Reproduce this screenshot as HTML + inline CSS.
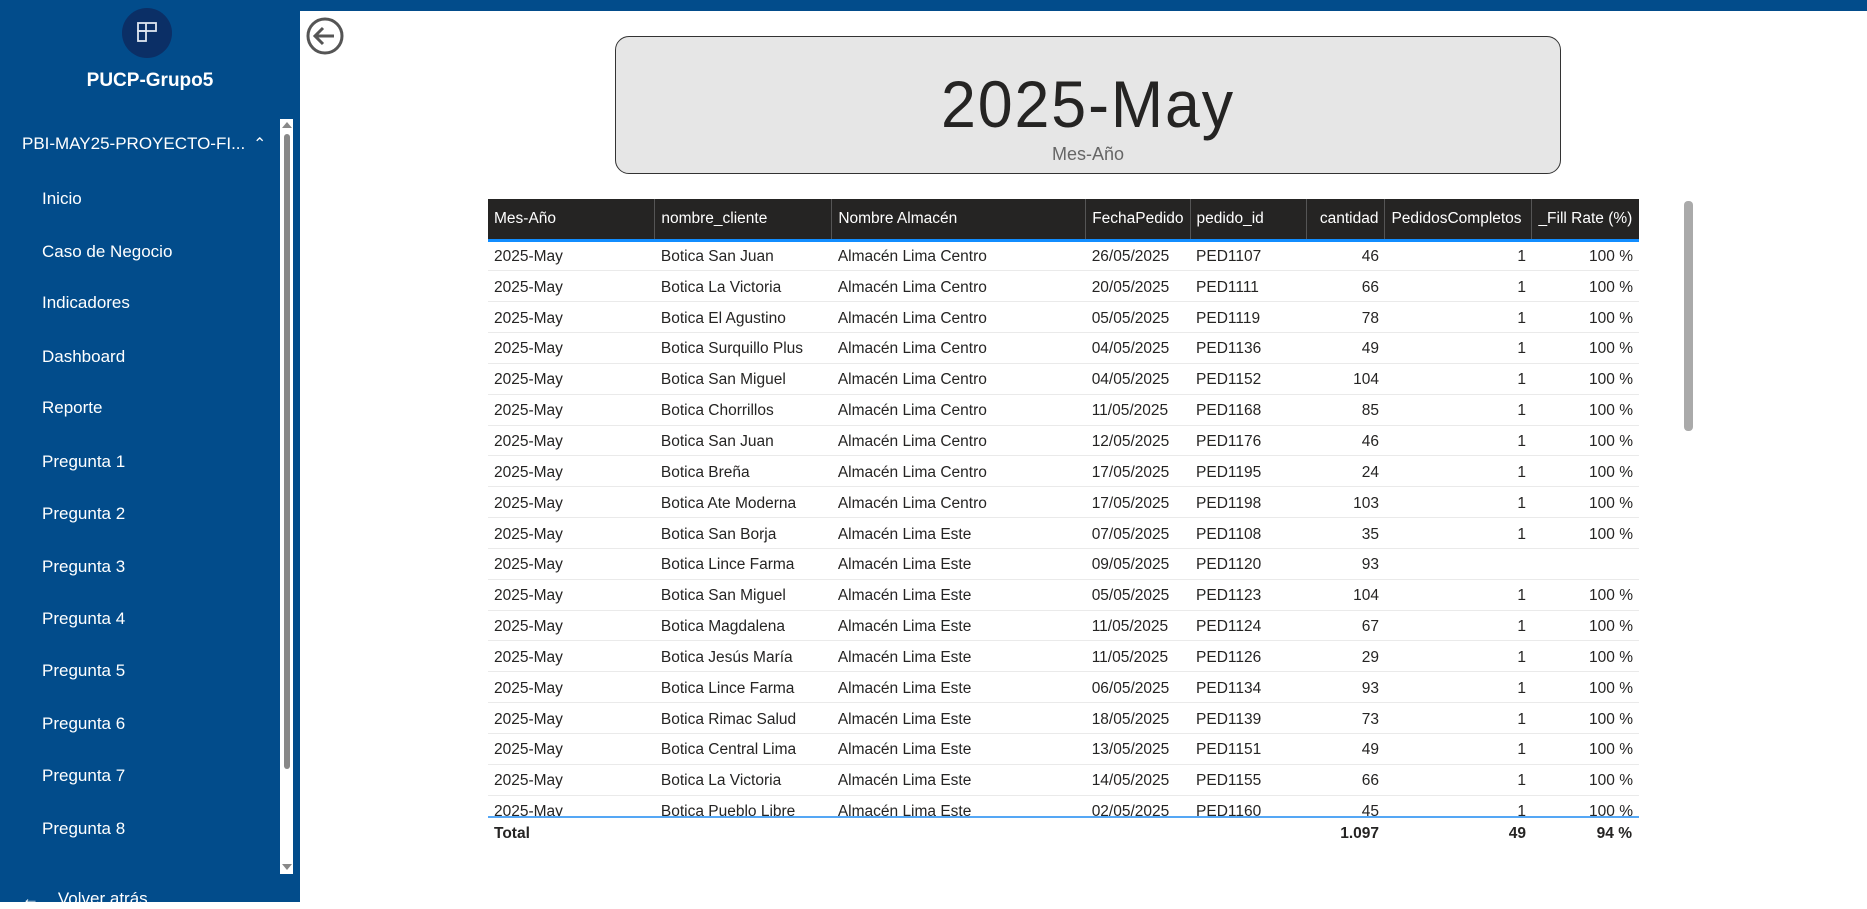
<!DOCTYPE html>
<html><head><meta charset="utf-8"><style>
*{margin:0;padding:0;box-sizing:border-box}
body{width:1867px;height:902px;overflow:hidden;background:#fff;font-family:"Liberation Sans",sans-serif;position:relative}
.sb{position:absolute;left:0;top:0;width:300px;height:902px;background:#024c8b;color:#fff}
.topbar{position:absolute;left:300px;top:0;width:1567px;height:11px;background:#024c8b}
.logo{position:absolute;left:122px;top:8px;width:50px;height:50px;border-radius:50%;background:#0b2f66}
.brand{position:absolute;left:0;width:300px;top:70px;text-align:center;font-weight:bold;font-size:19px}
.nav{position:absolute;font-size:17px;white-space:nowrap}
.track{position:absolute;left:280px;top:119px;width:13px;height:755px;background:#fff}
.thumb{position:absolute;left:284px;top:134px;width:6px;height:635px;background:#888;border-radius:3px}
.card{position:absolute;left:615px;top:36px;width:946px;height:138px;background:#e6e6e6;border:1.5px solid #333;border-radius:14px;text-align:center}
.big{position:absolute;left:0;right:0;top:34px;font-family:"Liberation Sans",sans-serif;font-size:66px;color:#252423;letter-spacing:2px;line-height:1;transform:scaleX(0.95)}
.sub{position:absolute;left:0;right:0;top:107px;font-size:18px;color:#666}
table{position:absolute;left:488px;top:199px;border-collapse:collapse;font-size:15.5px;color:#252423;table-layout:fixed}
th{background:#252423;color:#fff;font-weight:normal;height:41px;text-align:left;padding:0 6px;border-left:1px solid #555;border-bottom:3px solid #118dff;white-space:nowrap;overflow:hidden}
th:first-child{border-left:none}
td{height:30.85px;padding:3px 6px 0;border-bottom:1.5px solid #eaeaea;white-space:nowrap}
.r{text-align:right}
.wrap{position:absolute;left:488px;top:199px;width:1151px;height:618px;overflow:hidden}
.wrap table{left:0;top:0}
.bl{position:absolute;left:488px;top:816px;width:1151px;height:2px;background:#55a7f5}
.tot{position:absolute;top:825px;font-weight:bold;font-size:15.5px;color:#252423}
.vs{position:absolute;left:1684px;top:201px;width:9px;height:230px;background:#aaa;border-radius:4px}
</style></head><body>
<div class="topbar"></div>
<div class="sb">
 <div class="logo"><svg width="50" height="50" viewBox="0 0 50 50"><g fill="none" stroke="#dfe6f0" stroke-width="1.8"><rect x="16" y="15" width="18" height="8"/><rect x="16" y="23" width="8" height="10"/><line x1="24" y1="15" x2="24" y2="23"/></g></svg></div>
 <div class="brand">PUCP-Grupo5</div>
 <div class="nav" style="left:22px;top:134px">PBI-MAY25-PROYECTO-FI...</div>
 <div class="nav" style="left:253px;top:134px;font-size:16px">&#8963;</div>
 <div class="nav" style="left:42px;top:189px">Inicio</div>
 <div class="nav" style="left:42px;top:242px">Caso de Negocio</div>
 <div class="nav" style="left:42px;top:293px">Indicadores</div>
 <div class="nav" style="left:42px;top:347px">Dashboard</div>
 <div class="nav" style="left:42px;top:398px">Reporte</div>
 <div class="nav" style="left:42px;top:452px">Pregunta 1</div>
 <div class="nav" style="left:42px;top:504px">Pregunta 2</div>
 <div class="nav" style="left:42px;top:557px">Pregunta 3</div>
 <div class="nav" style="left:42px;top:609px">Pregunta 4</div>
 <div class="nav" style="left:42px;top:661px">Pregunta 5</div>
 <div class="nav" style="left:42px;top:714px">Pregunta 6</div>
 <div class="nav" style="left:42px;top:766px">Pregunta 7</div>
 <div class="nav" style="left:42px;top:819px">Pregunta 8</div>
 <div class="nav" style="left:22px;top:889px">&#8592;&nbsp;&nbsp;&nbsp;&nbsp;Volver atrás</div>
 <div class="track"></div><div class="thumb"></div>
 <div style="position:absolute;left:282px;top:122px;width:0;height:0;border-left:5px solid transparent;border-right:5px solid transparent;border-bottom:6px solid #888"></div>
 <div style="position:absolute;left:282px;top:864px;width:0;height:0;border-left:5px solid transparent;border-right:5px solid transparent;border-top:6px solid #888"></div>
</div>
<svg style="position:absolute;left:305px;top:16px" width="40" height="40" viewBox="0 0 40 40"><circle cx="20" cy="20" r="17" fill="none" stroke="#555" stroke-width="3"/><path d="M29 20H11M18 12l-8 8 8 8" fill="none" stroke="#555" stroke-width="3"/></svg>
<div class="card"><div class="big">2025-May</div><div class="sub">Mes-Año</div></div>
<div class="wrap"><table>
<colgroup><col style="width:167px"><col style="width:177px"><col style="width:254px"><col style="width:104px"><col style="width:117px"><col style="width:78px"><col style="width:147px"><col style="width:107px"></colgroup>
<tr><th>Mes-Año</th><th>nombre_cliente</th><th>Nombre Almacén</th><th>FechaPedido</th><th>pedido_id</th><th class="r">cantidad</th><th>PedidosCompletos</th><th>_Fill Rate (%)</th></tr>
<tr><td>2025-May</td><td>Botica San Juan</td><td>Almacén Lima Centro</td><td>26/05/2025</td><td>PED1107</td><td class="r">46</td><td class="r">1</td><td class="r">100 %</td></tr>
<tr><td>2025-May</td><td>Botica La Victoria</td><td>Almacén Lima Centro</td><td>20/05/2025</td><td>PED1111</td><td class="r">66</td><td class="r">1</td><td class="r">100 %</td></tr>
<tr><td>2025-May</td><td>Botica El Agustino</td><td>Almacén Lima Centro</td><td>05/05/2025</td><td>PED1119</td><td class="r">78</td><td class="r">1</td><td class="r">100 %</td></tr>
<tr><td>2025-May</td><td>Botica Surquillo Plus</td><td>Almacén Lima Centro</td><td>04/05/2025</td><td>PED1136</td><td class="r">49</td><td class="r">1</td><td class="r">100 %</td></tr>
<tr><td>2025-May</td><td>Botica San Miguel</td><td>Almacén Lima Centro</td><td>04/05/2025</td><td>PED1152</td><td class="r">104</td><td class="r">1</td><td class="r">100 %</td></tr>
<tr><td>2025-May</td><td>Botica Chorrillos</td><td>Almacén Lima Centro</td><td>11/05/2025</td><td>PED1168</td><td class="r">85</td><td class="r">1</td><td class="r">100 %</td></tr>
<tr><td>2025-May</td><td>Botica San Juan</td><td>Almacén Lima Centro</td><td>12/05/2025</td><td>PED1176</td><td class="r">46</td><td class="r">1</td><td class="r">100 %</td></tr>
<tr><td>2025-May</td><td>Botica Breña</td><td>Almacén Lima Centro</td><td>17/05/2025</td><td>PED1195</td><td class="r">24</td><td class="r">1</td><td class="r">100 %</td></tr>
<tr><td>2025-May</td><td>Botica Ate Moderna</td><td>Almacén Lima Centro</td><td>17/05/2025</td><td>PED1198</td><td class="r">103</td><td class="r">1</td><td class="r">100 %</td></tr>
<tr><td>2025-May</td><td>Botica San Borja</td><td>Almacén Lima Este</td><td>07/05/2025</td><td>PED1108</td><td class="r">35</td><td class="r">1</td><td class="r">100 %</td></tr>
<tr><td>2025-May</td><td>Botica Lince Farma</td><td>Almacén Lima Este</td><td>09/05/2025</td><td>PED1120</td><td class="r">93</td><td class="r"></td><td class="r"></td></tr>
<tr><td>2025-May</td><td>Botica San Miguel</td><td>Almacén Lima Este</td><td>05/05/2025</td><td>PED1123</td><td class="r">104</td><td class="r">1</td><td class="r">100 %</td></tr>
<tr><td>2025-May</td><td>Botica Magdalena</td><td>Almacén Lima Este</td><td>11/05/2025</td><td>PED1124</td><td class="r">67</td><td class="r">1</td><td class="r">100 %</td></tr>
<tr><td>2025-May</td><td>Botica Jesús María</td><td>Almacén Lima Este</td><td>11/05/2025</td><td>PED1126</td><td class="r">29</td><td class="r">1</td><td class="r">100 %</td></tr>
<tr><td>2025-May</td><td>Botica Lince Farma</td><td>Almacén Lima Este</td><td>06/05/2025</td><td>PED1134</td><td class="r">93</td><td class="r">1</td><td class="r">100 %</td></tr>
<tr><td>2025-May</td><td>Botica Rimac Salud</td><td>Almacén Lima Este</td><td>18/05/2025</td><td>PED1139</td><td class="r">73</td><td class="r">1</td><td class="r">100 %</td></tr>
<tr><td>2025-May</td><td>Botica Central Lima</td><td>Almacén Lima Este</td><td>13/05/2025</td><td>PED1151</td><td class="r">49</td><td class="r">1</td><td class="r">100 %</td></tr>
<tr><td>2025-May</td><td>Botica La Victoria</td><td>Almacén Lima Este</td><td>14/05/2025</td><td>PED1155</td><td class="r">66</td><td class="r">1</td><td class="r">100 %</td></tr>
<tr><td>2025-May</td><td>Botica Pueblo Libre</td><td>Almacén Lima Este</td><td>02/05/2025</td><td>PED1160</td><td class="r">45</td><td class="r">1</td><td class="r">100 %</td></tr>
</table></div>
<div class="bl"></div>
<div class="tot" style="left:494px">Total</div>
<div class="tot" style="left:1300px;width:79px;text-align:right">1.097</div>
<div class="tot" style="left:1400px;width:126px;text-align:right">49</div>
<div class="tot" style="left:1540px;width:92px;text-align:right">94 %</div>
<div class="vs"></div>
</body></html>
